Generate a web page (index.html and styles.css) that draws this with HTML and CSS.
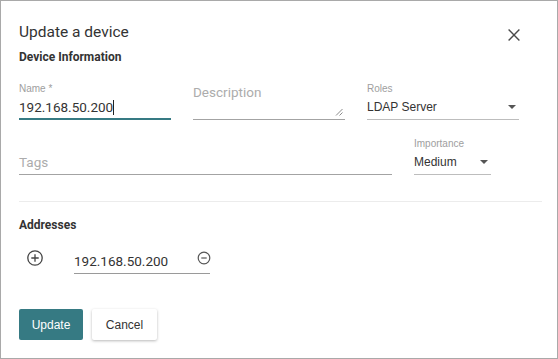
FILE: index.html
```html
<!DOCTYPE html>
<html lang="en">
<head>
<meta charset="utf-8">
<title>Update a device</title>
<link rel="stylesheet" href="styles.css">
</head>
<body>
<div class="dialog">
  <div class="header">
    <h1 class="title">Update a device</h1>
    <button class="close" aria-label="Close">
      <svg width="12" height="12" viewBox="0 0 12 12"><path d="M0.6 0.6L11.4 11.4M11.4 0.6L0.6 11.4" stroke="#4a4a4a" stroke-width="1.4" fill="none"/></svg>
    </button>
  </div>
  <h2 class="section">Device Information</h2>
  <div class="row row-3">
    <div class="field focused">
      <label class="label">Name *</label>
      <div class="input">192.168.50.200<span class="caret"></span></div>
    </div>
    <div class="field textarea">
      <div class="input placeholder">Description</div>
      <svg class="resize" width="8" height="8" viewBox="0 0 8 8"><path d="M7.5 1L1 7.5M7.5 4.5L4.5 7.5" stroke="#8a8a8a" stroke-width="1" fill="none"/></svg>
    </div>
    <div class="field select">
      <label class="label">Roles</label>
      <div class="input">LDAP Server<span class="arrow"></span></div>
    </div>
  </div>
  <div class="row row-2">
    <div class="field">
      <div class="input placeholder">Tags</div>
    </div>
    <div class="field select">
      <label class="label">Importance</label>
      <div class="input">Medium<span class="arrow"></span></div>
    </div>
  </div>
  <div class="divider"></div>
  <h2 class="section">Addresses</h2>
  <div class="address-row">
    <svg class="add-icon" width="18" height="18" viewBox="0 0 18 18"><circle cx="9" cy="9" r="7.2" stroke="#444" stroke-width="1.3" fill="none"/><path d="M9 5.3V12.7M5.3 9H12.7" stroke="#444" stroke-width="1.3"/></svg>
    <div class="field address">
      <div class="input"><span class="value">192.168.50.200</span>
        <svg class="remove-icon" width="14" height="14" viewBox="0 0 14 14"><circle cx="7" cy="7" r="5.8" stroke="#555" stroke-width="1.2" fill="none"/><path d="M4.3 7H9.7" stroke="#555" stroke-width="1.2"/></svg>
      </div>
    </div>
  </div>
  <div class="actions">
    <button class="btn primary">Update</button>
    <button class="btn secondary">Cancel</button>
  </div>
</div>
</body>
</html>
```

FILE: styles.css
```css
html, body {
  margin: 0;
  padding: 0;
  background: #fff;
}
body {
  font-family: Roboto, "Liberation Sans", Arial, sans-serif;
  color: #333;
}
.dialog {
  width: 558px;
  height: 359px;
  box-sizing: border-box;
  border: 1px solid #a9a9a9;
  padding: 21px 15px 0 18px;
  background: #fff;
}
.header {
  display: flex;
  justify-content: space-between;
  height: 26px;
}
.title {
  margin: 0;
  align-self: flex-start;
  font: 400 15.5px/20px Roboto, sans-serif;
  color: #333;
}
.close {
  align-self: center;
  width: 24px;
  height: 24px;
  margin-right: 16px;
  padding: 0;
  border: 0;
  background: none;
  display: flex;
  align-items: center;
  justify-content: center;
}
.section {
  margin: 1px 0 0;
  font: 700 12px/16px Roboto, sans-serif;
  color: #333;
}
.row {
  display: grid;
  column-gap: 22px;
}
.row-3 {
  grid-template-columns: repeat(3, 152px);
  margin-top: 18px;
}
.row-2 {
  grid-template-columns: 373px 77px;
  margin-top: 18px;
  align-items: end;
}
.field {
  display: flex;
  flex-direction: column;
  position: relative;
}
.label {
  display: block;
  height: 12px;
  font: 10px/12px "Liberation Sans", Arial, sans-serif;
  color: #9e9e9e;
}
.input {
  margin-top: 3px;
  font: 13.5px/18px Roboto, sans-serif;
  color: #333;
  padding-bottom: 3px;
  border-bottom: 1px solid #a3a3a3;
}
.focused .input {
  padding-bottom: 2px;
  border-bottom: 2px solid #367a83;
}
.caret {
  display: inline-block;
  width: 1px;
  height: 15px;
  background: #222;
  vertical-align: -3px;
}
.placeholder {
  color: #acacac;
}
.textarea .input {
  margin-top: 0;
  flex: 1;
}
.resize {
  position: absolute;
  right: 2px;
  bottom: 4px;
}
.select .input {
  display: flex;
  justify-content: space-between;
  align-items: center;
  font: 12px/18px "Liberation Sans", Arial, sans-serif;
  border-bottom-color: #bdbdbd;
}
.arrow {
  width: 0;
  height: 0;
  margin-right: 3px;
  border-left: 4px solid transparent;
  border-right: 4px solid transparent;
  border-top: 4px solid #555;
}
.divider {
  margin-top: 26px;
  height: 1px;
  background: #ececec;
}
.divider + .section {
  margin-top: 15px;
}
.address-row {
  display: flex;
  align-items: flex-start;
  margin-top: 16px;
}
.add-icon {
  margin-left: 7px;
  flex: none;
}
.address {
  width: 136px;
  margin-left: 30px;
  margin-top: 3px;
}
.address .input {
  margin-top: 0;
  display: flex;
  align-items: flex-start;
  border-bottom-color: #9a9a9a;
}
.address .value {
  flex: 1;
}
.remove-icon {
  margin-top: -1px;
  margin-right: -1px;
  flex: none;
}
.actions {
  display: flex;
  gap: 9px;
  margin-top: 35px;
}
.btn {
  height: 31px;
  padding: 0;
  border: 0;
  border-radius: 2px;
  font: 12px "Liberation Sans", Arial, sans-serif;
  cursor: pointer;
}
.primary {
  width: 64px;
  background: #367a83;
  color: #fff;
}
.secondary {
  width: 65px;
  background: #fff;
  color: #333;
  box-shadow: 0 1px 3px rgba(0, 0, 0, 0.28);
}
```
